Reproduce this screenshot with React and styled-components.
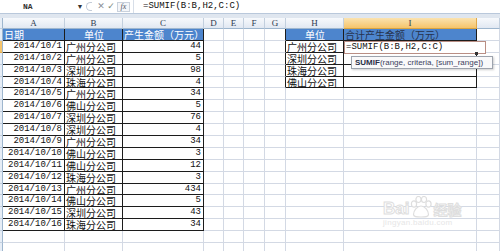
import React from 'react';
import styled, { createGlobalStyle } from 'styled-components';

const Global = createGlobalStyle`
  html, body { margin: 0; padding: 0; background: #fff; }
  body { width: 500px; height: 251px; overflow: hidden; font-family: "Liberation Sans", Arial, sans-serif; }
`;

const Page = styled.div`
  position: relative;
  width: 500px;
  height: 251px;
  overflow: hidden;
  display: flex;
  flex-direction: column;
  background: #fff;
`;

const FormulaBar = styled.div`
  display: flex;
  align-items: center;
  height: 13px;
  background: #fff;
  border-bottom: 1px solid #b9c8db;
  flex-shrink: 0;
`;

const NameBox = styled.div`
  width: 76px;
  box-sizing: border-box;
  padding-left: 23px;
  font-family: "Liberation Mono", monospace;
  font-size: 8px;
  font-weight: bold;
  color: #333;
`;

const DropArrow = styled.span`
  width: 8px;
  font-size: 7px;
  color: #333;
  text-align: center;
`;

const Splitter = styled.span`
  width: 6px;
  height: 9px;
  margin: 0 4px 0 2px;
  border: 1px solid #c4ccd8;
  border-right: none;
  border-radius: 6px 0 0 6px;
  box-sizing: border-box;
`;

const BarIcon = styled.span`
  width: 10px;
  text-align: center;
  font-size: ${p => p.$size || 9}px;
  color: ${p => p.$color};
  font-family: "DejaVu Sans", sans-serif;
  line-height: 11px;
`;

const FxBox = styled.span`
  width: 13px;
  height: 10px;
  margin-left: 1px;
  box-sizing: border-box;
  border: 1px solid #c9d1dc;
  background: #f4f6f9;
  font-family: "Liberation Serif", serif;
  font-style: italic;
  font-size: 8px;
  line-height: 8px;
  text-align: center;
  color: #556;
`;

const FormulaInput = styled.div`
  flex: 1;
  height: 13px;
  margin-left: 3px;
  padding-left: 9px;
  border-left: 1px solid #d7dee8;
  font-family: "Liberation Mono", monospace;
  font-size: 9px;
  line-height: 13px;
  color: #111;
`;

const Band = styled.div`
  height: 4px;
  background: #dfe6ef;
  flex-shrink: 0;
`;

const Sheet = styled.div`
  display: grid;
  grid-template-columns: 3px 62px 58px 81px 20px 20px 21px 21px 58px 133px 23px;
  grid-template-rows: 11px repeat(20, 11.9px);
`;

const ColHead = styled.div`
  box-sizing: border-box;
  border-right: 1px solid ${p => (p.$sel ? '#e0a94a' : '#c2cfde')};
  border-bottom: 1px solid ${p => (p.$sel ? '#d9a441' : '#9eb6ce')};
  background: ${p =>
    p.$sel
      ? 'linear-gradient(#fbe3b0, #f6c46b)'
      : 'linear-gradient(#f7f9fc, #e1e8f2)'};
  font-family: "Liberation Serif", serif;
  font-size: 9px;
  line-height: 10px;
  text-align: center;
  color: #2e3b50;
`;

const RowHead = styled.div`
  box-sizing: border-box;
  border-right: 1px solid #9eb6ce;
  border-bottom: 1px solid ${p => (p.$sel ? '#e2ab4d' : '#c2cfde')};
  background: ${p => (p.$sel ? '#f6c46b' : '#e6edf6')};
`;

const Cell = styled.div`
  box-sizing: border-box;
  overflow-x: clip;
  overflow-y: visible;
  white-space: nowrap;
  border-right: 1px solid ${p => (p.$rb ? '#1c1c1c' : '#d3d9e4')};
  border-bottom: 1px solid ${p => (p.$bb ? '#1c1c1c' : '#d3d9e4')};
  background: ${p => p.$fill || '#fff'};
  color: ${p => p.$color || '#111'};
  text-align: ${p => p.$align || 'left'};
  padding: ${p => (p.$align === 'right' ? '0 2px 0 0' : '0 0 0 1px')};
  font-family: ${p =>
    p.$mono
      ? '"Liberation Mono", "Noto Sans CJK SC", monospace'
      : '"Noto Sans CJK SC", "Noto Sans", sans-serif'};
  font-size: ${p => (p.$mono ? '9px' : '10px')};
  line-height: 11px;
`;

const EditBox = styled.div`
  position: absolute;
  left: 344px;
  top: 41px;
  width: 142px;
  height: 13px;
  box-sizing: border-box;
  border: 1px solid #b98e84;
  background: #fff;
  padding-left: 1px;
  font-family: "Liberation Mono", monospace;
  font-size: 9px;
  line-height: 11px;
  color: #111;
`;

const FillHandle = styled.div`
  position: absolute;
  left: 475px;
  top: 52px;
  width: 3px;
  height: 3px;
  background: #333;
`;

const Tip = styled.div`
  position: absolute;
  left: 351px;
  top: 56px;
  width: 142px;
  height: 13px;
  box-sizing: border-box;
  border: 1px solid #9da3ad;
  background: #f9f9fa;
  box-shadow: 1px 1px 2px rgba(0, 0, 0, 0.2);
  padding-left: 3px;
  font-family: "Liberation Sans", Arial, sans-serif;
  font-size: 8px;
  line-height: 11px;
  color: #3c4260;
  white-space: nowrap;
  b { color: #2a2f48; }
`;

const Watermark = styled.div`
  position: absolute;
  left: 383px;
  top: 196px;
  width: 92px;
  display: flex;
  flex-direction: column;
  align-items: flex-start;
  pointer-events: none;
  color: #e3e3e3;
`;

const MarkRow = styled.div`
  display: flex;
  align-items: flex-end;
`;

const MarkBai = styled.span`
  font-family: "Liberation Sans", Arial, sans-serif;
  font-weight: bold;
  font-size: 17px;
  line-height: 18px;
  color: #fff;
  -webkit-text-stroke: 1px #dedede;
`;

const MarkZh = styled.span`
  font-family: "Noto Sans CJK SC", sans-serif;
  font-weight: bold;
  font-size: 14px;
  line-height: 18px;
  color: #fff;
  -webkit-text-stroke: 1px #dedede;
`;

const MarkUrl = styled.span`
  font-family: "Liberation Sans", Arial, sans-serif;
  font-size: 8px;
  line-height: 10px;
  color: #e6e6e6;
  letter-spacing: 0.3px;
`;

const COLS = ['', 'A', 'B', 'C', 'D', 'E', 'F', 'G', 'H', 'I', ''];

const DATA = [
  ['2014/10/1', '广州分公司', '44'],
  ['2014/10/2', '广州分公司', '5'],
  ['2014/10/3', '深圳分公司', '98'],
  ['2014/10/4', '珠海分公司', '4'],
  ['2014/10/5', '广州分公司', '34'],
  ['2014/10/6', '佛山分公司', '5'],
  ['2014/10/7', '深圳分公司', '76'],
  ['2014/10/8', '深圳分公司', '4'],
  ['2014/10/9', '广州分公司', '34'],
  ['2014/10/10', '佛山分公司', '3'],
  ['2014/10/11', '佛山分公司', '12'],
  ['2014/10/12', '珠海分公司', '3'],
  ['2014/10/13', '广州分公司', '434'],
  ['2014/10/14', '佛山分公司', '5'],
  ['2014/10/15', '深圳分公司', '43'],
  ['2014/10/16', '珠海分公司', '34'],
];

const SUMMARY = ['广州分公司', '深圳分公司', '珠海分公司', '佛山分公司'];
const BLUE = '#4d85cd';
const ROWS = 20;

const inTable = (r, c) =>
  (r >= 1 && r <= 17 && c >= 1 && c <= 3) || (r >= 1 && r <= 5 && c >= 8 && c <= 9);

function cellProps(r, c) {
  const p = { $rb: inTable(r, c) || inTable(r, c + 1), $bb: inTable(r, c) || inTable(r + 1, c) };
  let text = '';
  if (r === 1) {
    if (c >= 1 && c <= 3) p.$fill = BLUE;
    if (c === 8 || c === 9) p.$fill = BLUE;
    p.$color = '#fff';
    if (c === 1) text = '日期';
    if (c === 2) { text = '单位'; p.$align = 'center'; }
    if (c === 3) text = '产生金额（万元）';
    if (c === 8) { text = '单位'; p.$align = 'center'; }
    if (c === 9) { text = '合计产生金额（万元）'; p.$color = '#26324d'; }
  } else if (r >= 2 && r <= 17) {
    const row = DATA[r - 2];
    if (c === 1) { text = row[0]; p.$mono = true; p.$align = 'right'; }
    if (c === 2) text = row[1];
    if (c === 3) { text = row[2]; p.$mono = true; p.$align = 'right'; }
  }
  if (r >= 2 && r <= 5 && c === 8) text = SUMMARY[r - 2];
  return { p, text };
}

const PawIcon = () => (
  <svg width="24" height="22" viewBox="0 0 24 22" fill="#fff" stroke="#dedede" strokeWidth="1.2">
    <ellipse cx="5" cy="8" rx="2.6" ry="3.2" />
    <ellipse cx="9.5" cy="3.5" rx="2.6" ry="3" />
    <ellipse cx="15" cy="3.5" rx="2.6" ry="3" />
    <ellipse cx="19.5" cy="8" rx="2.6" ry="3.2" />
    <path d="M12 10c-4 0-7.5 5-7.5 8.5 0 2.5 3 2.5 7.5 2.5s7.5 0 7.5-2.5C19.5 15 16 10 12 10z" />
  </svg>
);

export default function App() {
  const cells = [];
  COLS.forEach((l, c) => {
    if (c === 0) cells.push(<RowHead key="h0" />);
    else cells.push(<ColHead key={`h${c}`} $sel={c === 9}>{l}</ColHead>);
  });
  for (let r = 1; r <= ROWS; r++) {
    for (let c = 0; c < COLS.length; c++) {
      if (c === 0) {
        cells.push(<RowHead key={`r${r}c0`} $sel={r === 2} />);
        continue;
      }
      const { p, text } = cellProps(r, c);
      cells.push(<Cell key={`r${r}c${c}`} {...p}>{text}</Cell>);
    }
  }
  return (
    <Page>
      <Global />
      <FormulaBar>
        <NameBox>NA</NameBox>
        <DropArrow>▼</DropArrow>
        <Splitter />
        <BarIcon $color="#8a8f99" $size={9}>✕</BarIcon>
        <BarIcon $color="#7c8a7c" $size={9}>✓</BarIcon>
        <FxBox>fx</FxBox>
        <FormulaInput>=SUMIF(B:B,H2,C:C)</FormulaInput>
      </FormulaBar>
      <Band />
      <Sheet>{cells}</Sheet>
      <EditBox>=SUMIF(B:B,H2,C:C)</EditBox>
      <FillHandle />
      <Tip><b>SUMIF</b>(range, criteria, [sum_range])</Tip>
      <Watermark>
        <MarkRow>
          <MarkBai>Bai</MarkBai>
          <PawIcon />
          <MarkZh>经验</MarkZh>
        </MarkRow>
        <MarkUrl>jingyan.baidu.com</MarkUrl>
      </Watermark>
    </Page>
  );
}
